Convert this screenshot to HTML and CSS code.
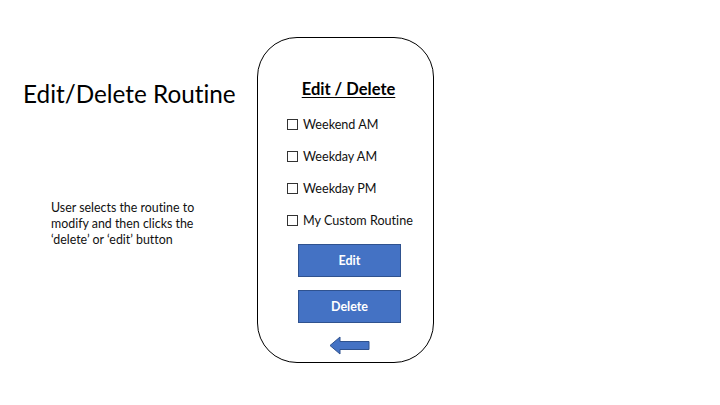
FILE: index.html
```html
<!DOCTYPE html>
<html>
<head>
<meta charset="utf-8">
<link rel="stylesheet" href="styles.css">
</head>
<body>
<div class="slide">
  <div class="left">
    <h1 class="page-title">Edit/Delete Routine</h1>
    <p class="desc">User selects the routine to<br>modify and then clicks the<br>‘delete’ or ‘edit’ button</p>
  </div>
  <div class="phone">
    <h2 class="phone-title">Edit / Delete</h2>
    <ul class="list">
      <li><span class="box"></span>Weekend AM</li>
      <li><span class="box"></span>Weekday AM</li>
      <li><span class="box"></span>Weekday PM</li>
      <li><span class="box"></span>My Custom Routine</li>
    </ul>
    <div class="btn">Edit</div>
    <div class="btn">Delete</div>
    <svg class="back" width="42" height="19" viewBox="0 0 42 19">
      <path d="M1 9.5 L11 1 L11 5.5 L40 5.5 L40 13.5 L11 13.5 L11 18 Z" fill="#4472C4" stroke="#2F528F" stroke-width="1" stroke-linejoin="miter"/>
    </svg>
  </div>
</div>
</body>
</html>
```
FILE: styles.css
```css
html, body {
  margin: 0;
  padding: 0;
  background: #fff;
}
.slide {
  width: 720px;
  height: 405px;
  display: flex;
  font-family: Lato, "Open Sans", sans-serif;
  font-variant-ligatures: none;
  color: #000;
}
.left {
  width: 257px;
  flex: none;
}
.page-title {
  margin: 79px 0 0 23px;
  font-weight: 400;
  font-size: 24.3px;
  line-height: 30px;
  letter-spacing: 0;
}
.desc {
  margin: 91px 0 0 51px;
  font-size: 12.4px;
  line-height: 16px;
  color: #111;
}
.phone {
  margin-top: 37px;
  width: 175px;
  height: 324px;
  border: 1px solid #000;
  border-radius: 40px;
  display: flex;
  flex-direction: column;
  box-sizing: content-box;
}
.phone-title {
  margin: 40px 0 0 0;
  text-align: center;
  padding-left: 6px;
  font-size: 16.5px;
  line-height: 22px;
  font-weight: 700;
  text-decoration: underline;
  text-underline-offset: 2px;
  text-decoration-thickness: 1px;
}
.list {
  list-style: none;
  margin: 8px 0 0 29px;
  padding: 0;
}
.list li {
  height: 32px;
  display: flex;
  align-items: center;
  font-size: 12.6px;
  color: #111;
}
.list li:last-child {
  height: 33px;
}
.box {
  width: 9px;
  height: 9px;
  border: 1px solid #333;
  margin-right: 5px;
  flex: none;
}
.btn {
  margin: 7px 0 0 40px;
  width: 101px;
  height: 31px;
  background: #4472C4;
  border: 1px solid #2F528F;
  color: #fff;
  font-size: 12.5px;
  font-weight: 700;
  display: flex;
  align-items: center;
  justify-content: center;
}
.btn + .btn {
  margin-top: 13px;
}
.back {
  margin: 13px 0 0 71px;
  display: block;
}
```
